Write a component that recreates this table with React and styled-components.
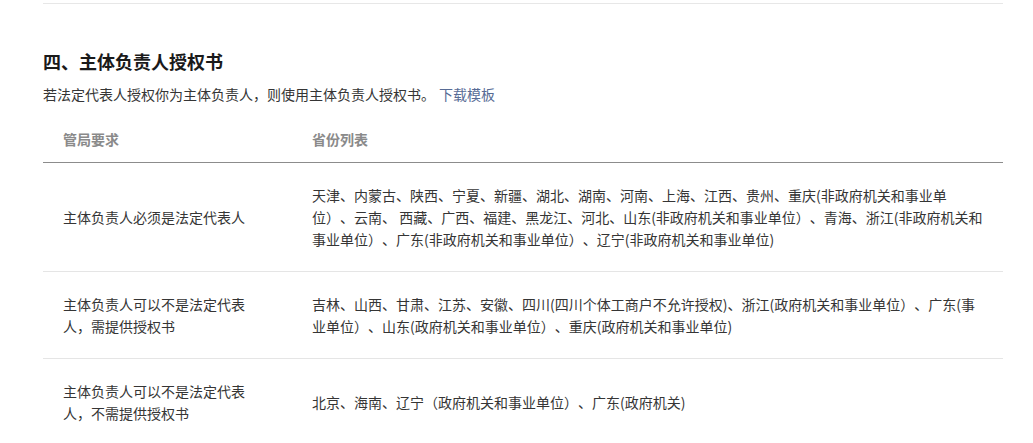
import React from "react";
import styled, { createGlobalStyle } from "styled-components";

const GlobalStyle = createGlobalStyle`
  html, body {
    margin: 0;
    padding: 0;
    background: #fff;
  }
  body {
    font-family: "Noto Sans CJK SC", "Noto Sans", sans-serif;
    color: #353535;
    text-spacing-trim: space-all;
  }
`;

const Page = styled.div`
  padding: 3px 30px 0 43px;
  width: 960px;
`;

const Divider = styled.div`
  height: 1px;
  background: #e7e7e7;
`;

const Title = styled.h2`
  margin: 44px 0 0;
  font-size: 18px;
  line-height: 26px;
  font-weight: bold;
  color: #1a1a1a;
`;

const Intro = styled.p`
  margin: 9px 0 0;
  font-size: 14px;
  line-height: 22px;
  color: #353535;
`;

const Link = styled.a`
  margin-left: 4px;
  color: #576b95;
  text-decoration: none;
`;

const Table = styled.div`
  margin-top: 11px;
  width: 960px;
`;

const Row = styled.div`
  display: grid;
  grid-template-columns: 249px 1fr;
  align-items: center;
  border-bottom: 1px solid ${(p) => (p.$head ? "#8c8c8c" : "#e5e5e5")};
  padding: ${(p) => (p.$head ? "12px 0" : "21px 0")};
`;

const Cell = styled.div`
  font-size: 14px;
  line-height: 22px;
  color: ${(p) => (p.$head ? "#8a8a8a" : "#353535")};
  font-weight: ${(p) => (p.$head ? "bold" : "normal")};
  padding: ${(p) => (p.$first ? "0 40px 0 20px" : "0 20px 0 20px")};
`;

const rows = [
  {
    need: "主体负责人必须是法定代表人",
    list: "天津、内蒙古、陕西、宁夏、新疆、湖北、湖南、河南、上海、江西、贵州、重庆(非政府机关和事业单位）、云南、 西藏、广西、福建、黑龙江、河北、山东(非政府机关和事业单位）、青海、浙江(非政府机关和事业单位）、广东(非政府机关和事业单位）、辽宁(非政府机关和事业单位)",
  },
  {
    need: "主体负责人可以不是法定代表人，需提供授权书",
    list: "吉林、山西、甘肃、江苏、安徽、四川(四川个体工商户不允许授权)、浙江(政府机关和事业单位）、广东(事业单位）、山东(政府机关和事业单位）、重庆(政府机关和事业单位)",
  },
  {
    need: "主体负责人可以不是法定代表人，不需提供授权书",
    list: "北京、海南、辽宁（政府机关和事业单位）、广东(政府机关)",
  },
];

export default function App() {
  return (
    <>
      <GlobalStyle />
      <Page>
        <Divider />
        <Title>四、主体负责人授权书</Title>
        <Intro>
          若法定代表人授权你为主体负责人，则使用主体负责人授权书。
          <Link href="#">下载模板</Link>
        </Intro>
        <Table>
          <Row $head>
            <Cell $head $first>管局要求</Cell>
            <Cell $head>省份列表</Cell>
          </Row>
          {rows.map((r) => (
            <Row key={r.need}>
              <Cell $first>{r.need}</Cell>
              <Cell>{r.list}</Cell>
            </Row>
          ))}
        </Table>
      </Page>
    </>
  );
}
